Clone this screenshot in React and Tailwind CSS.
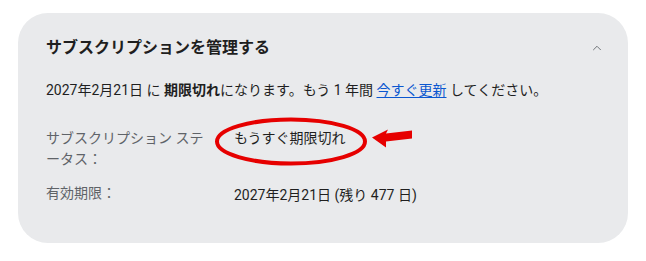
import { ChevronUp } from 'lucide-react';

const FONT = { fontFamily: 'Roboto, "Noto Sans CJK JP", sans-serif' };

export default function App() {
  return (
    <div className="w-[646px] h-[261px] bg-white pt-[13px] pl-[18px]" style={FONT}>
      <div className="w-[610px] h-[230px] bg-[#e9eaec] rounded-[30px] pl-[28px] pr-[24px] pt-[23px]">
        {/* Header */}
        <div className="flex items-center justify-between h-[24px]">
          <h2 className="text-[16px] font-bold text-[#1f1f1f] leading-[24px]">サブスクリプションを管理する</h2>
          <ChevronUp size={14} strokeWidth={1.5} className="text-[#5f6368]" />
        </div>

        <p className="mt-[20px] text-[14px] text-[#1f1f1f] leading-[20px]">
          2027年2月21日 に <span className="font-bold">期限切れ</span>になります。もう 1 年間{' '}
          <a className="text-[#0b57d0] underline underline-offset-2">今すぐ更新</a> してください。
        </p>

        {/* Rows */}
        <div className="mt-[28px] text-[14px] leading-[21px]">
          <div className="flex">
            <div className="w-[188px] text-[#5f6368] pr-[30px]">サブスクリプション ステータス：</div>
            <div className="relative text-[#1f1f1f]">
              もうすぐ期限切れ
              <svg className="absolute left-[-20px] top-[-12px] overflow-visible" width="200" height="52" viewBox="0 0 200 52">
                <ellipse cx="77" cy="25.5" rx="74" ry="22" fill="none" stroke="#e60000" strokeWidth="4" />
                <path d="M158 21.5 L174 13.5 L172 17.5 L198 14.5 L198 22.5 L172 25.5 L172 31.5 Z" fill="#e60000" />
              </svg>
            </div>
          </div>
          <div className="flex mt-[13px]">
            <div className="w-[188px] text-[#5f6368]">有効期限：</div>
            <div className="text-[#1f1f1f] pt-[2px]">2027年2月21日 (残り 477 日)</div>
          </div>
        </div>
      </div>
    </div>
  );
}
